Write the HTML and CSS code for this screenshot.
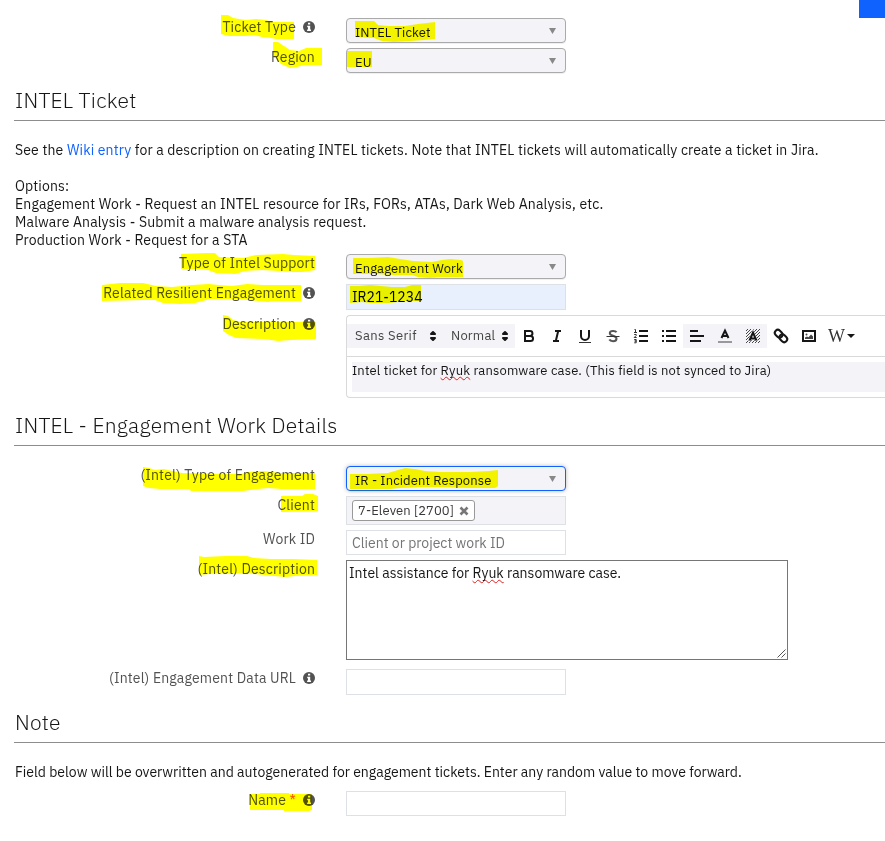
FILE: index.html
```
<!DOCTYPE html>
<html lang="en">
<head>
<meta charset="utf-8">
<title>INTEL Ticket</title>
<link rel="stylesheet" href="styles.css">
</head>
<body>
<svg class="defs" width="0" height="0">
  <symbol id="info" viewBox="0 0 12 12"><circle cx="6" cy="6" r="6" fill="#525252"/><path d="M5 1.8h2.200v1.800H5zM4.200 4.800h3v3.700H8V10H4.100V8.500h.9V6.200h-.8z" fill="#fff"/></symbol>
  <symbol id="updown" viewBox="0 0 18 18"><path d="M7 11l2 2 2-2zM7 7l2-2 2 2z" fill="#161616" stroke="#161616" stroke-width="2" stroke-linejoin="round"/></symbol>
</svg>
<header class="top"><div class="top-action"></div></header>
<main class="form">
  <div class="row"><label class="label">Ticket Type<svg class="info"><use href="#info"/></svg></label><div class="select">INTEL Ticket<i class="caret"></i></div></div>
  <div class="row last"><label class="label">Region</label><div class="select">EU<i class="caret"></i></div></div>

  <h2>INTEL Ticket</h2>
  <p class="intro">See the <a>Wiki entry</a> for a description on creating INTEL tickets. Note that INTEL tickets will automatically create a ticket in Jira.<br><br>Options:<br>Engagement Work - Request an INTEL resource for IRs, FORs, ATAs, Dark Web Analysis, etc.<br>Malware Analysis - Submit a malware analysis request.<br>Production Work - Request for a STA</p>
  <div class="row"><label class="label">Type of Intel Support</label><div class="select">Engagement Work<i class="caret"></i></div></div>
  <div class="row"><label class="label">Related Resilient Engagement<svg class="info"><use href="#info"/></svg></label><div class="input filled">IR21-1234</div></div>
  <div class="row last"><label class="label">Description<svg class="info"><use href="#info"/></svg></label>
    <div class="editor">
      <div class="toolbar">
        <div class="pickers"><span class="font">Sans Serif</span><svg class="ud"><use href="#updown"/></svg><span class="size">Normal</span><svg class="ud"><use href="#updown"/></svg></div>
        <svg class="tool" viewBox="0 0 18 18"><path d="M5 4h5a2.400 2.400 0 0 1 0 4.900H5zM5 8.900h5.500a2.500 2.500 0 0 1 0 5.100H5z" class="k"/></svg>
        <svg class="tool" viewBox="0 0 18 18"><path d="M7 4h6M5 14h6M10.200 4L7.800 14" class="k"/></svg>
        <svg class="tool" viewBox="0 0 18 18"><path d="M5 3v6a4 4 0 0 0 8 0V3" class="k"/><path d="M3 15.500h12" class="t"/></svg>
        <svg class="tool" viewBox="0 0 18 18"><path d="M12.500 5.200C11.500 3.500 6 3.200 5.800 6c-.2 3.500 7 2 6.700 5.800-.3 3.200-6 2.800-7.200.7" class="k g"/><path d="M2.500 9.500h13" class="t"/></svg>
        <svg class="tool" viewBox="0 0 18 18"><path d="M7 4h9M7 9h9M7 14h9" class="k"/><path d="M2.500 2.500h1v3M2 5.500h3M2.200 7.500h2v1l-2 2h2.500M2.200 12.500h2v1.500h-1.500 1.500v1.800h-2" class="t"/></svg>
        <svg class="tool" viewBox="0 0 18 18"><path d="M6 4h10M6 9h10M6 14h10M2 4h2M2 9h2M2 14h2" class="k"/></svg>
        <div class="group">
          <svg class="tool" viewBox="0 0 18 18"><path d="M2 4h8M2 9h14M2 14h11" class="k"/></svg>
          <svg class="tool" viewBox="0 0 18 18"><path d="M5.500 11L9 3.500l3.500 7.500M6.500 9h5" class="k"/><path d="M2 15h14" stroke="#999" stroke-width="2"/></svg>
          <svg class="tool" viewBox="0 0 18 18"><path d="M2 4l2-2M2 7l5-5M2 10l8-8M2 13l11-11M2 16L16 2M5 16L16 5M8 16l8-8M11 16l5-5M14 16l2-2" stroke="#333" stroke-width=".9"/><path d="M5.500 14L9 5.500l3.500 8.500M6.500 11.500h5" stroke="#f3f3f8" stroke-width="3" fill="none"/><path d="M5.500 13.500L9 5.500l3.500 8M6.500 11.500h5" class="k"/></svg>
        </div>
        <svg class="tool" viewBox="0 0 18 18"><g transform="rotate(45 9 9)"><rect x="1.500" y="6" width="8.500" height="6" rx="3" class="k"/><rect x="8" y="6" width="8.500" height="6" rx="3" class="k"/></g></svg>
        <svg class="tool" viewBox="0 0 18 18"><rect x="3" y="4" width="12" height="10" class="k"/><circle cx="6.500" cy="7.500" r="1" fill="#444"/><path d="M5 12V10.500l2-1 1.500.8L11 7.500l2 2V12z" fill="#444"/></svg>
        <span class="wiki">W</span><i class="drop"></i>
      </div>
      <div class="content">Intel ticket for <u class="spell">Ryuk</u> ransomware case. (This field is not synced to Jira)</div>
    </div>
  </div>

  <h2>INTEL - Engagement Work Details</h2>
  <div class="row first"><label class="label">(Intel) Type of Engagement</label><div class="select focus">IR - Incident Response<i class="caret"></i></div></div>
  <div class="row"><label class="label">Client</label><div class="chips"><span class="chip">7-Eleven [2700]<svg class="x" viewBox="0 0 10 10"><path d="M1.500 1.500l7 7M8.500 1.500l-7 7"/></svg></span></div></div>
  <div class="row"><label class="label">Work ID</label><div class="input short hint">Client or project work ID</div></div>
  <div class="row area"><label class="label">(Intel) Description</label><div class="textarea">Intel assistance for <u class="spell">Ryuk</u> ransomware case.<svg class="grip" viewBox="0 0 9 9"><path d="M.5 8.500l8-8M4.500 8.500l4-4"/></svg></div></div>
  <div class="row last"><label class="label">(Intel) Engagement Data URL<svg class="info"><use href="#info"/></svg></label><div class="input"></div></div>

  <h2>Note</h2>
  <p class="note">Field below will be overwritten and autogenerated for engagement tickets. Enter any random value to move forward.</p>
  <div class="row"><label class="label">Name <span class="req">*</span><svg class="info"><use href="#info"/></svg></label><div class="input short"></div></div>
</main>

<!-- Marker strokes laid over the form -->
<svg class="marker" viewBox="0 0 885 841">
  <g fill="#ff0">
    <polygon points="221,15 228,15 233,18 239,19 246,20 256,19 266,20 272,22 294,22 294,39 276,39 271,38 262,37 254,35 245,36 229,36 221,34"/>
    <polygon points="273,42 278,42 284,46 290,50 299,51 306,48 322,48 322,65 304,65 297,67 290,68 281,64 276,58 273,55"/>
    <polygon points="181,254 206,253 215,253 219,257 243,258 256,255 283,254 294,255 315,256 315,270 303,272 292,272 279,271 262,270 245,271 235,274 216,273 208,270 197,269 181,269"/>
    <polygon points="102,285 120,283 143,283 156,286 172,287 192,285 209,284 219,285 232,286 247,284 263,285 301,285 301,301 274,301 268,302 250,300 226,299 210,299 195,303 180,304 163,303 155,300 143,300 102,301"/>
    <polygon points="223,315 228,316 233,320 241,322 316,322 316,339 291,340 278,341 264,339 236,338 229,335 223,331"/>
    <polygon points="143,467 149,468 155,470 164,469 172,471 182,473 225,474 241,474 248,472 263,471 280,473 315,473 315,489 281,489 268,488 258,489 243,491 191,491 189,489 160,489 149,488 143,486"/>
    <polygon points="281,496 302,496 305,494 313,494 318,496 318,511 281,512"/>
    <polygon points="199,556 204,557 226,556 247,556 254,558 271,559 293,559 317,560 317,575 295,576 286,577 274,576 255,574 246,573 232,574 220,573 209,574 199,575"/>
    <polygon points="250,794 260,794 260,793 289,793 289,794 312,794 312,810 309,811 284,811 284,810 250,810"/>
    <polygon points="355,21 374,21 378,25 388,26 405,26 418,24 435,22 435,39 424,40 410,41 394,42 382,41 374,38 355,37"/>
    <polygon points="347,51 372,51 372,67 347,67"/>
    <polygon points="353,258 370,258 388,257 400,259 413,261 432,262 442,260 450,259 461,260 463,261 463,277 442,277 429,278 418,277 412,275 395,275 375,274 353,274"/>
    <polygon points="350,286 359,286 370,285 392,287 405,287 412,285 421,285 421,301 405,301 389,303 370,303 362,302 350,303"/>
    <polygon points="350,474 367,474 388,473 398,470 405,468 415,469 425,471 440,472 470,472 489,471 498,470 498,486 495,488 470,488 430,487 400,488 390,489 350,489"/>
  </g>
</svg>
</body>
</html>
```
FILE: styles.css
```
* { box-sizing: border-box; }
body {
  margin: 0;
  height: 841px;
  overflow: hidden;
  background: #fff;
  color: #161616;
  font: 14px/18px "IBM Plex Sans", Roboto, sans-serif;
}
svg { display: block; flex: none; }
.defs { position: absolute; }
.top { display: flex; justify-content: flex-end; height: 18px; }
.top-action { width: 26px; height: 18px; background: #0f62fe; }
.form { padding-left: 14px; }

.row { display: flex; align-items: flex-start; gap: 31px; margin-bottom: 5px; }
.row.last { margin-bottom: 0; }
.row.first { margin-top: 20px; }
.row.area { margin-bottom: 9px; }
.label {
  display: flex;
  align-items: center;
  justify-content: flex-end;
  width: 301px;
  height: 18px;
  color: #525252;
  letter-spacing: .16px;
  white-space: pre;
}
.info { width: 12px; height: 12px; margin-left: 7px; }
.req { color: #fa4d56; }

h2 {
  margin: 0;
  height: 48px;
  padding: 13px 0 0 1px;
  border-bottom: 1px solid #8d8d8d;
  font-size: 21px;
  font-weight: 300;
  line-height: 28px;
  letter-spacing: .25px;
}
p { margin: 0; white-space: nowrap; }
.intro { padding: 20px 0 5px 1px; letter-spacing: .15px; }
.intro a { color: #0f62fe; }
.note { padding: 20px 0 10px 1px; }

.select {
  display: flex;
  justify-content: space-between;
  width: 220px;
  height: 25px;
  padding: 4px 9px 0 8px;
  border: 1px solid #aaa;
  border-radius: 4px;
  background: #f3f3f8;
  box-shadow: 0 1px 1px #0001;
  color: #161616;
  font-size: 13px;
  line-height: 19px;
  letter-spacing: .1px;
}
.select.focus { border-color: #0f62fe; box-shadow: 0 0 4px #0004; }
.caret {
  width: 7px;
  height: 6px;
  margin-top: 5px;
  background: #888;
  clip-path: polygon(0 0, 100% 0, 50% 100%);
}
.input {
  width: 220px;
  height: 26px;
  padding: 3px 5px;
  border: 1px solid #dde1e6;
}
.input.short { height: 25px; }
.input.filled { background: #e8f0fe; color: #000; }
.hint { color: #757575; }

.editor {
  flex: 1;
  height: 83px;
  border: 1px solid #d9d9dc;
  border-right: 0;
  border-radius: 4px 0 0 4px;
}
.toolbar { display: flex; align-items: center; height: 41px; border-bottom: 1px solid #d9d9dc; }
.pickers {
  display: flex;
  align-items: center;
  width: 168px;
  height: 24px;
  padding-left: 8px;
  background: #f3f3f8;
  color: #444;
  font-size: 13px;
  letter-spacing: .2px;
}
.font { width: 69px; letter-spacing: .35px; }
.size { width: 45px; margin-left: 9px; }
.ud { width: 18px; height: 18px; }
.tool { width: 18px; height: 18px; margin: 0 5px; }
.group { display: flex; align-items: center; height: 24px; background: #f3f3f8; }
.k { fill: none; stroke: #161616; stroke-width: 2; }
.k.g { stroke: #555; }
.t { fill: none; stroke: #333; stroke-width: 1; }
.wiki { margin-left: 5px; color: #333; font: 18px/20px "Liberation Serif", serif; }
.drop { margin-left: 2px; border: 4px solid transparent; border-top-color: #161616; border-bottom: 0; }
.content {
  height: 30px;
  margin: 5px 0 0 5px;
  background: #f3f3f8;
  font-size: 13px;
  letter-spacing: .16px;
}
.spell { text-decoration: underline wavy #e02020 1px; text-underline-offset: 1px; text-decoration-skip-ink: none; }

.chips { width: 220px; height: 29px; padding: 3px 5px; border: 1px solid #dde1e6; background: #f3f3f8; }
.chip {
  display: inline-flex;
  align-items: center;
  gap: 5px;
  height: 21px;
  padding: 0 5px;
  border: 1px solid #999;
  border-radius: 3px;
  background: #fff;
  color: #393939;
  font-size: 13px;
  letter-spacing: .1px;
  white-space: nowrap;
}
.x { width: 10px; height: 10px; stroke: #777; stroke-width: 2.600; }
.textarea {
  position: relative;
  width: 442px;
  height: 100px;
  padding: 3px 2px;
  border: 1px solid #767676;
}
.grip { position: absolute; right: 1px; bottom: 1px; width: 9px; height: 9px; stroke: #555; stroke-width: 1; }
.marker {
  position: absolute;
  top: 0;
  left: 0;
  width: 885px;
  height: 841px;
  mix-blend-mode: multiply;
  pointer-events: none;
}
```
